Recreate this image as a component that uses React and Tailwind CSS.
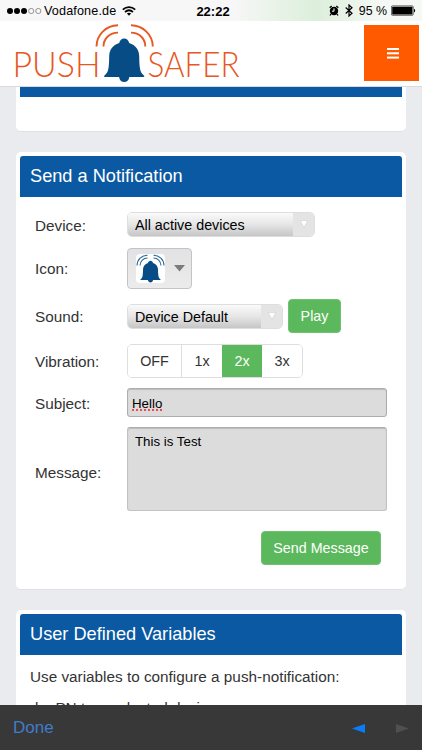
import clsx from 'clsx'

const BellShape = () => (
  <path d="M32 0C29.400 0 27.600 1.800 27 4.600C20.500 6.800 17.200 11.500 17 17.500C16.900 22 16.900 26 16.300 29.500C15.800 33 14.500 35.200 12.300 37C11.500 37.700 11.700 38.400 12.800 38.400H26.900C27.300 41.600 29.300 43.400 32 43.400S36.700 41.600 37.100 38.400H51.200C52.300 38.400 52.500 37.700 51.700 37C49.500 35.200 48.200 33 47.700 29.500C47.100 26 47.100 22 47 17.500C46.800 11.500 43.500 6.800 37 4.600C36.400 1.800 34.600 0 32 0Z" />
)

const Logo = () => (
  <svg className="w-[230px] h-[65px] overflow-visible" viewBox="14 21 230 65">
    <g className="fill-[#e8571f] font-['Lato'] font-light text-[36px]">
      <text x="12.500" y="77" textLength="88" lengthAdjust="spacingAndGlyphs">PUSH</text>
      <text x="147.500" y="77" textLength="92" lengthAdjust="spacingAndGlyphs">SAFER</text>
    </g>
    <g transform="translate(92.200 38.500)" className="fill-[#074c85]">
      <BellShape />
    </g>
    <g fill="none" stroke="#e8571f" strokeWidth="1.900">
      <path d="M96.500 46.500C96.500 35 106 25.300 118 25.300" />
      <path d="M103.500 46.500C103.500 38.500 110 32.600 118 32.600" />
      <path d="M131 25.300C143 25.300 152.800 35 152.800 46.500" />
      <path d="M131 32.600C139 32.600 145.300 38.500 145.300 46.500" />
    </g>
  </svg>
)

const StatusBar = () => (
  <div className="h-[21px] shrink-0 flex items-center justify-between pl-[7px] pr-[6px] bg-[linear-gradient(90deg,#f7f7f7_55%,#dcefdb_75%,#f5f8f5_90%)] text-black">
    <div className="w-[150px] flex items-center">
      <svg className="w-[35px] h-[8px]" viewBox="0 0 35 8">
        {[3, 10, 17].map((x) => <circle key={x} cx={x} cy="4" r="3" />)}
        {[24.2, 31.3].map((x) => <circle key={x} cx={x} cy="4" r="2.600" fill="none" stroke="#555" strokeWidth=".6" />)}
      </svg>
      <span className="ml-[2px] pt-[1px] text-[12.600px] leading-none tracking-[0.150px]">Vodafone.de</span>
      <svg className="ml-[6px] w-[14px] h-[10px]" viewBox="0 0 14 10" fill="none" stroke="black" strokeWidth="1.700">
        <path d="M.8 3.700C4.400.3 9.600.3 13.200 3.700" />
        <path d="M3 6C5.400 3.900 8.600 3.900 11 6" />
        <path d="M4.900 7.500C6.200 6.400 7.800 6.400 9.100 7.500L7 9.700Z" fill="black" stroke="none" />
      </svg>
    </div>
    <span className="pl-[3px] pt-[1px] text-[13px] leading-none font-bold">22:22</span>
    <div className="w-[150px] flex items-center justify-end">
      <svg className="w-[10px] h-[11px]" viewBox="0 0 10 11">
        <circle cx="5" cy="6" r="4.200" />
        <path d="M.7 2.700L2.700.9M9.300 2.700L7.300.9M2 9L1 10.500M8 9L9 10.500" stroke="black" strokeWidth="1.300" />
        <path d="M5 3.400V6.200H2.900" fill="none" stroke="white" strokeWidth="1" />
      </svg>
      <svg className="ml-[6px] w-[8px] h-[13px]" viewBox="0 0 8 13" fill="none" stroke="black" strokeWidth="1.200">
        <path d="M.7 3.500L7 9.300L4 12V1L7 3.700L.7 9.500" />
      </svg>
      <span className="ml-[6px] pt-[1px] text-[12.400px] leading-none whitespace-nowrap">95 %</span>
      <svg className="ml-[4px] w-[25px] h-[11px]" viewBox="0 0 25 11">
        <rect x=".4" y=".9" width="21.800" height="9.400" rx="1" fill="none" stroke="black" strokeWidth=".6" />
        <rect x="1.200" y="1.700" width="20.200" height="7.800" rx=".5" />
        <path d="M23 3.800C24.600 4.200 24.600 7 23 7.400Z" />
      </svg>
    </div>
  </div>
)

const Header = () => (
  <header className="h-[66px] shrink-0 flex items-start justify-between pl-[14px] pr-[3px] bg-white border-b border-[#d9dade]">
    <Logo />
    <button className="mt-[4px] w-[55px] h-[56px] bg-[#ff5a00] flex items-center justify-center" aria-label="Menu">
      <svg className="ml-[3px] w-[12px] h-[11px]" viewBox="0 0 12 11" fill="white">
        <rect width="12" height="2" y="0" />
        <rect width="12" height="2" y="4.300" />
        <rect width="12" height="2" y="8.600" />
      </svg>
    </button>
  </header>
)

const Card = ({ title, children, className }) => (
  <section className={clsx('shrink-0 bg-white rounded-[5px] border-b border-[#dfe0e4] px-[4px] pt-[4px]', className)}>
    <h2 className="h-[41px] bg-[#0b59a2] rounded-t-[3px] pl-[10px] text-white text-[18.200px] leading-[40px]">{title}</h2>
    {children}
  </section>
)

const Row = ({ label, children, className, labelClassName = 'pt-[2px]' }) => (
  <div className={clsx('flex items-center', className)}>
    <label className={clsx('w-[92px] shrink-0 text-[15.300px] leading-none text-[#333]', labelClassName)}>{label}</label>
    {children}
  </div>
)

const Select = ({ value, className }) => (
  <div className={clsx('h-[25px] flex rounded-[5px] border border-[#dedede] overflow-hidden text-[14.300px] text-black', className)}>
    <span className="flex-1 pl-[7px] leading-[25px] bg-linear-to-b from-[#fafafa] via-[#e6e6e6] to-[#c6c6c6]">{value}</span>
    <span className="w-[21px] flex items-center justify-center bg-[#e4e4e4]">
      <svg className="w-[8px] h-[8px] mb-[1px] shrink-0" viewBox="0 0 8 8">
        <path d="M.2.5H7.800L4 7.500Z" fill="white" stroke="#c8c8c8" strokeWidth=".5" />
      </svg>
    </span>
  </div>
)

const vibrations = [
  { label: 'OFF', width: 'w-[53px]' },
  { label: '1x', width: 'w-[41px]' },
  { label: '2x', width: 'w-[40px]', active: true },
  { label: '3x', width: 'w-[40px]' },
]

const NotificationForm = () => (
  <div className="pt-[15px] pl-[15px] pr-[15px] flex flex-col">
    <Row label="Device:" className="h-[25px]">
      <Select value="All active devices" className="w-[188px]" />
    </Row>
    <Row label="Icon:" className="mt-[11px] h-[41px]" labelClassName="pt-0">
      <button className="w-[65px] h-[41px] rounded-[4px] border border-[#c4c4c6] bg-linear-to-b from-[#e2e2e4] to-[#ececec] flex items-center pl-[8px]">
        <svg className="w-[29px] h-[29px] bg-white rounded-[4px]" viewBox="0 0 29 29">
          <g transform="translate(-1.500 6.800) scale(.5)" fill="#074c85"><BellShape /></g>
          <g fill="none" stroke="#2b6696" strokeWidth="1.100">
            <path d="M1 11.500C1.200 5.400 5.700 1.300 11.500 1.300M4 11.500C4.200 7 7.400 4 11.500 4" />
            <path d="M28 11.500C27.800 5.400 23.300 1.300 17.500 1.300M25 11.500C24.800 7 21.600 4 17.500 4" />
          </g>
        </svg>
        <svg className="ml-[9px] w-[11px] h-[7px]" viewBox="0 0 11 7">
          <path d="M0 0H11L5.500 6.500Z" fill="#7c7c7c" />
        </svg>
      </button>
    </Row>
    <Row label="Sound:" className="mt-[10px] h-[34px]">
      <Select value="Device Default" className="w-[156px]" />
      <button className="ml-[5px] w-[53px] h-[34px] rounded-[4px] border border-[#6fc16f] bg-[#5cb85c] pt-[2px] text-white text-[14.300px]">Play</button>
    </Row>
    <Row label="Vibration:" className="mt-[11px] h-[34px]">
      <div className="h-[34px] flex rounded-[5px] border border-[#dedede] overflow-hidden text-[14.300px] text-[#333]">
        {vibrations.map((v, i) => (
          <button
            key={v.label}
            className={clsx('pt-[2px]', v.width, i === 1 && 'border-l border-[#dedede]', v.active ? 'bg-[#5cb85c] text-white' : 'bg-white')}
          >
            {v.label}
          </button>
        ))}
      </div>
    </Row>
    <Row label="Subject:" className="mt-[10px] h-[29px]">
      <div className="w-[261px] h-[29px] rounded-[3px] border border-[#adadad] bg-[#dcdcdc] shadow-[inset_0_1px_1px_#bcbcbc] pl-[4px] text-[13.300px] leading-[29px] text-black">
        <span className="underline decoration-dotted decoration-[#f0494c] decoration-2 underline-offset-[1px] [text-decoration-skip-ink:none]">Hello</span>
      </div>
    </Row>
    <Row label="Message:" className="mt-[10px] h-[84px]" labelClassName="pt-[7px]">
      <div className="w-[261px] h-[84px] rounded-[3px] border border-[#c2c2c2] border-t-[#adadad] bg-[#dcdcdc] shadow-[inset_0_1px_1px_#bcbcbc] pl-[7px] pt-[6px] text-[13.300px] leading-[16px] text-black">
        This is Test
      </div>
    </Row>
    <button className="mt-[20px] mr-[6px] self-end w-[120px] h-[34px] rounded-[4px] border border-[#6fc16f] bg-[#5cb85c] pt-[2px] text-white text-[14.300px]">Send Message</button>
  </div>
)

const App = () => {
  return (
    <div className="w-[422px] h-[750px] flex flex-col overflow-hidden bg-[#eaebef] font-['Liberation_Sans',Arial,sans-serif]">
      <StatusBar />
      <Header />
      <main className="flex-1 min-h-0 overflow-hidden flex flex-col pl-[16px] pr-[16px]">
        <section className="h-[45px] shrink-0 bg-white rounded-b-[5px] border-b border-[#dfe0e4] px-[4px]">
          <div className="h-[10px] bg-[#0b59a2]" />
        </section>
        <Card title="Send a Notification" className="mt-[20px] h-[438px]">
          <NotificationForm />
        </Card>
        <Card title="User Defined Variables" className="mt-[20px] h-[150px]">
          <div className="pl-[10px] pt-[10px] text-[15.300px] leading-[24px] text-[#333]">
            <p>Use variables to configure a push-notification:</p>
            <p className="pl-[5px] pt-[7px]">by PN to a selected device</p>
          </div>
        </Card>
      </main>
      <footer className="h-[45px] shrink-0 bg-[#383838] flex items-center justify-between pl-[13px] pr-[13px]">
        <button className="text-[#3f7dc9] text-[17px]">Done</button>
        <div className="flex items-center gap-[31px] pt-[2px]">
          <svg className="w-[13px] h-[9px]" viewBox="0 0 13 9"><path d="M13 0V9L0 4.500Z" fill="#0a7cf8" /></svg>
          <svg className="w-[13px] h-[9px]" viewBox="0 0 13 9"><path d="M0 0V9L13 4.500Z" fill="#505050" /></svg>
        </div>
      </footer>
    </div>
  )
}

export default App
